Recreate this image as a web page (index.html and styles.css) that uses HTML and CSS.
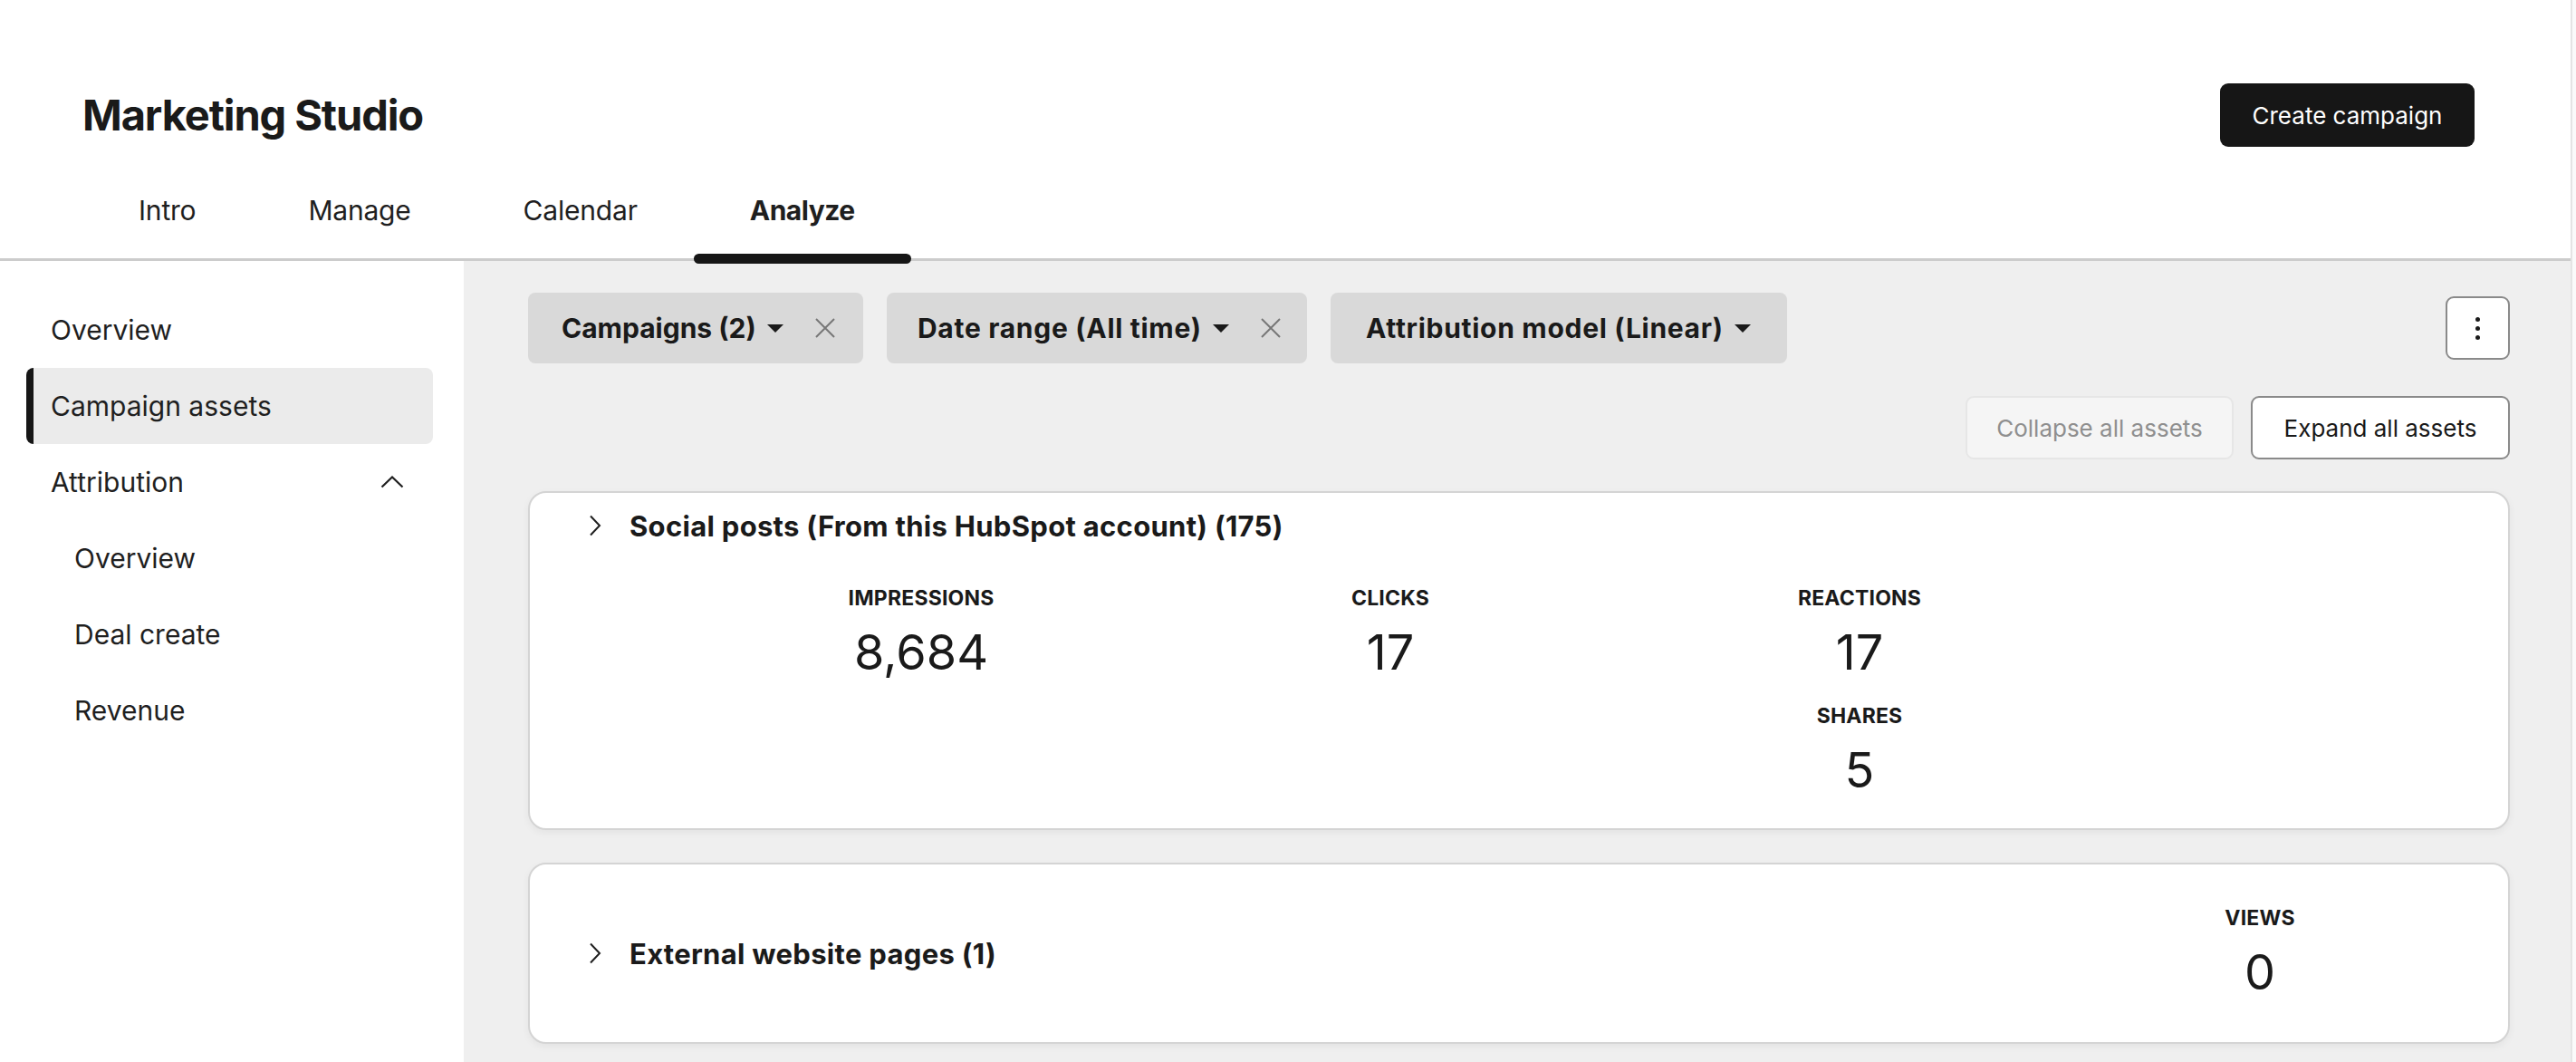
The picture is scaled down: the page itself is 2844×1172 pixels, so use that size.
FILE: index.html
```html
<!DOCTYPE html>
<html lang="en">
<head>
<meta charset="utf-8">
<title>Marketing Studio</title>
<link rel="stylesheet" href="styles.css">
</head>
<body>
<div class="app">
  <div class="page">
    <header class="top">
      <div class="titlebar">
        <h1 class="title">Marketing Studio</h1>
        <button class="btn-primary">Create campaign</button>
      </div>
      <nav class="tabs">
        <a class="tab">Intro</a>
        <a class="tab">Manage</a>
        <a class="tab">Calendar</a>
        <a class="tab tab-active">Analyze</a>
      </nav>
    </header>
    <div class="main">
      <aside class="sidebar">
        <div class="side-item">Overview</div>
        <div class="side-item side-active">Campaign assets</div>
        <div class="side-item side-group">
          <span>Attribution</span>
          <svg class="chev-up" width="26" height="14" viewBox="0 0 26 14"><path d="M1.5 12.5 L13 1.5 L24.5 12.5" fill="none" stroke="#1f1f1f" stroke-width="2.2"/></svg>
        </div>
        <div class="side-item side-sub">Overview</div>
        <div class="side-item side-sub">Deal create</div>
        <div class="side-item side-sub">Revenue</div>
      </aside>
      <section class="content">
        <div class="filters">
          <div class="chip chip-campaigns">
            <span class="chip-label">Campaigns (2)</span>
            <span class="caret"></span>
            <svg class="chip-x" width="22" height="22" viewBox="0 0 22 22"><path d="M1 1 L21 21 M21 1 L1 21" stroke="#777" stroke-width="2"/></svg>
          </div>
          <div class="chip chip-date">
            <span class="chip-label">Date range (All time)</span>
            <span class="caret"></span>
            <svg class="chip-x" width="22" height="22" viewBox="0 0 22 22"><path d="M1 1 L21 21 M21 1 L1 21" stroke="#777" stroke-width="2"/></svg>
          </div>
          <div class="chip chip-plain">
            <span class="chip-label">Attribution model (Linear)</span>
            <span class="caret"></span>
          </div>
          <button class="kebab" aria-label="More">
            <span class="dot"></span><span class="dot"></span><span class="dot"></span>
          </button>
        </div>
        <div class="actions">
          <button class="btn-outline btn-disabled">Collapse all assets</button>
          <button class="btn-outline btn-expand">Expand all assets</button>
        </div>
        <div class="card card-social">
          <div class="card-head">
            <svg class="chev-right" width="14" height="24" viewBox="0 0 14 24"><path d="M2 1.5 L12 12 L2 22.5" fill="none" stroke="#1f1f1f" stroke-width="2"/></svg>
            <span class="card-title">Social posts (From this HubSpot account) (175)</span>
          </div>
          <div class="stats">
            <div class="stat-col">
              <div class="stat">
                <div class="stat-label">IMPRESSIONS</div>
                <div class="stat-value">8,684</div>
              </div>
            </div>
            <div class="stat-col">
              <div class="stat">
                <div class="stat-label">CLICKS</div>
                <div class="stat-value">17</div>
              </div>
            </div>
            <div class="stat-col">
              <div class="stat">
                <div class="stat-label">REACTIONS</div>
                <div class="stat-value">17</div>
              </div>
              <div class="stat stat-next">
                <div class="stat-label">SHARES</div>
                <div class="stat-value">5</div>
              </div>
            </div>
          </div>
        </div>
        <div class="card card-row">
          <div class="card-head">
            <svg class="chev-right" width="14" height="24" viewBox="0 0 14 24"><path d="M2 1.5 L12 12 L2 22.5" fill="none" stroke="#1f1f1f" stroke-width="2"/></svg>
            <span class="card-title">External website pages (1)</span>
          </div>
          <div class="stat stat-views">
            <div class="stat-label">VIEWS</div>
            <div class="stat-value">0</div>
          </div>
        </div>
      </section>
    </div>
  </div>
  <div class="scrolltrack"></div>
</div>
</body>
</html>
```

FILE: styles.css
```css
* { box-sizing: border-box; }
html, body { margin: 0; padding: 0; }
body {
  font-family: Inter, "Noto Sans", sans-serif;
  color: #1f1f1f;
  background: #ffffff;
  width: 2844px;
  height: 1172px;
  overflow: hidden;
}
button { font-family: inherit; cursor: pointer; }

.app { display: flex; height: 1172px; }
.page { flex: 1; display: flex; flex-direction: column; min-width: 0; }
.scrolltrack {
  width: 6px;
  background: #fafafa;
  border-left: 2px solid #e4e4e4;
}

/* header */
.top {
  border-bottom: 3px solid #cccccc;
  height: 288px;
  display: flex;
  flex-direction: column;
}
.titlebar {
  display: flex;
  align-items: center;
  justify-content: space-between;
  padding: 92px 106px 0 91px;
  height: 162px;
}
.title {
  margin: 0;
  font-size: 47px;
  font-weight: 700;
  line-height: 66px;
  color: #1a1a1a;
  letter-spacing: -1.1px;
}
.btn-primary {
  height: 70px;
  width: 281px;
  background: #161616;
  color: #ffffff;
  border: none;
  border-radius: 9px;
  font-size: 26px;
  font-weight: 400;
}
.tabs {
  display: flex;
  padding-left: 91px;
  height: 123px;
}
.tab {
  position: relative;
  padding: 50px 62px 0;
  font-size: 30px;
  line-height: 40px;
  color: #1f1f1f;
  letter-spacing: -0.2px;
}
.tab-active { font-weight: 700; letter-spacing: -0.5px; }
.tab-active::after {
  content: "";
  position: absolute;
  left: 0;
  right: 0;
  bottom: -6px;
  height: 11px;
  background: #161616;
  border-radius: 6px;
}

/* main */
.main { flex: 1; display: flex; min-height: 0; }
.sidebar {
  width: 512px;
  flex: none;
  padding: 34px 34px 0 29px;
  background: #ffffff;
}
.side-item {
  height: 84px;
  display: flex;
  align-items: center;
  justify-content: space-between;
  padding: 0 32px 0 27px;
  font-size: 30px;
  color: #1f1f1f;
  border-radius: 8px;
}
.side-active {
  background: #ebebeb;
  border-left: 8px solid #161616;
  padding-left: 19px;
}
.side-sub { padding-left: 53px; }
.chev-up { display: block; }

.content {
  flex: 1;
  background: #efefef;
  padding: 35px 67px 0 71px;
  min-width: 0;
}
.filters {
  display: flex;
  align-items: center;
  gap: 26px;
  height: 78px;
}
.chip {
  height: 78px;
  display: flex;
  align-items: center;
  background: #d9d9d9;
  border-radius: 8px;
  padding: 0 0 0 37px;
}
.chip-campaigns { width: 370px; }
.chip-date { width: 464px; padding-left: 34px; }
.chip-plain { width: 504px; padding-left: 39px; }
.chip-label {
  font-size: 30px;
  font-weight: 700;
  color: #1a1a1a;
}
.chip-date .chip-label, .chip-plain .chip-label { letter-spacing: 0.7px; }
.caret {
  width: 0;
  height: 0;
  margin-left: 12px;
  border-left: 9px solid transparent;
  border-right: 9px solid transparent;
  border-top: 9px solid #1a1a1a;
}
.chip-x { margin-left: 35px; display: block; }
.kebab {
  margin-left: auto;
  width: 71px;
  height: 70px;
  background: #ffffff;
  border: 2px solid #8a8a8a;
  border-radius: 9px;
  display: flex;
  flex-direction: column;
  align-items: center;
  justify-content: center;
  gap: 5px;
  padding: 0;
}
.dot {
  width: 5px;
  height: 5px;
  border-radius: 50%;
  background: #1a1a1a;
}
.actions {
  display: flex;
  justify-content: flex-end;
  gap: 19px;
  margin-top: 36px;
}
.btn-outline {
  height: 70px;
  padding: 0;
  background: #ffffff;
  border: 2px solid #8a8a8a;
  border-radius: 9px;
  font-size: 26px;
  color: #1a1a1a;
}
.btn-disabled {
  background: #f5f5f5;
  border-color: #e6e6e6;
  color: #8f8f8f;
  width: 296px;
}
.btn-expand { width: 286px; }

.card {
  background: #ffffff;
  border: 2px solid #d4d4d4;
  border-radius: 20px;
  box-shadow: 0 3px 8px rgba(0, 0, 0, 0.05);
  margin-top: 35px;
}
.card-social {
  height: 374px;
  padding: 18px 0 0 65px;
}
.card-head {
  display: flex;
  align-items: center;
  height: 36px;
  gap: 31px;
}
.chev-right { display: block; flex: none; }
.card-title {
  font-size: 31px;
  font-weight: 700;
  color: #1a1a1a;
  white-space: nowrap;
  letter-spacing: 0.3px;
}
.stats {
  display: grid;
  grid-template-columns: repeat(3, 518px);
  margin: 47px 0 0 108px;
}
.stat { text-align: center; }
.stat-label {
  font-size: 23px;
  font-weight: 700;
  line-height: 30px;
  color: #1a1a1a;
  letter-spacing: 0.2px;
}
.stat-value {
  font-size: 54px;
  font-weight: 400;
  line-height: 60px;
  margin-top: 15px;
  color: #1a1a1a;
}
.stat-next { margin-top: 25px; }

.card-row {
  height: 200px;
  margin-top: 36px;
  display: flex;
  align-items: center;
  justify-content: space-between;
  padding: 0 174px 0 65px;
}
.stat-views { width: 200px; margin-top: -4px; }
```
